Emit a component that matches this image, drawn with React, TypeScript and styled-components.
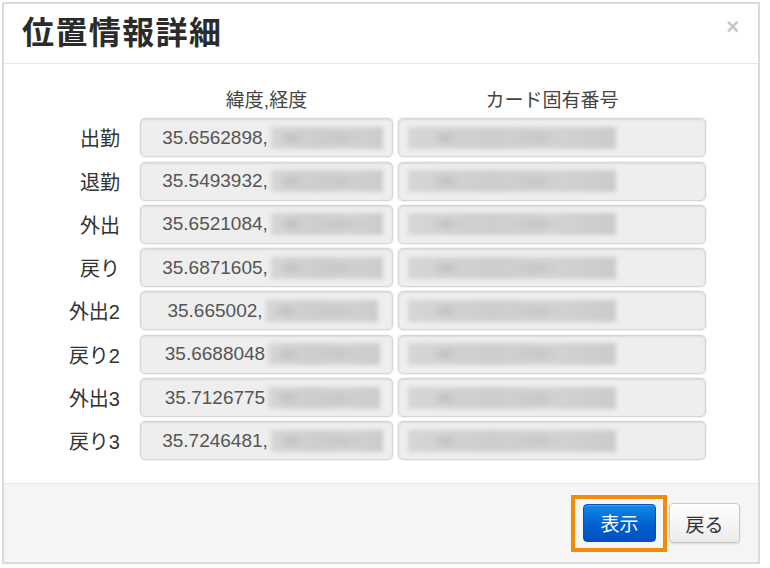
import styled, { createGlobalStyle } from "styled-components";

const GlobalStyle = createGlobalStyle`
  html, body {
    margin: 0;
    padding: 0;
    background: #fff;
  }
  body {
    font-family: "Liberation Sans", "Noto Sans CJK JP", Arial, sans-serif;
    color: #333;
  }
`;

const Modal = styled.div`
  box-sizing: border-box;
  width: 758px;
  margin: 2px 0 0 2px;
  border: 2px solid #dadada;
  background: #fff;
`;

const Header = styled.div`
  height: 59px;
  display: flex;
  align-items: center;
  justify-content: space-between;
  padding: 0 18px;
  border-bottom: 1px solid #e6e6e6;
`;

const Title = styled.h1`
  margin: -8px 0 0;
  font-family: "Noto Sans CJK JP", "Liberation Sans", sans-serif;
  font-size: 32px;
  font-weight: 700;
  letter-spacing: 1.4px;
  color: #2b2b2b;
  line-height: 1;
`;

const Close = styled.span`
  font-family: "Liberation Sans", Arial, sans-serif;
  font-size: 22px;
  font-weight: 700;
  color: #c6c6c6;
  margin-top: -14px;
  margin-right: 1px;
`;

const Body = styled.div`
  padding: 18px 51px 23px 0;
`;

const Grid = styled.div`
  display: grid;
  grid-template-columns: 131px 253px 308px;
  column-gap: 5px;
  row-gap: 4.3px;
`;

const ColHead = styled.div`
  height: 32px;
  display: flex;
  align-items: center;
  justify-content: center;
  font-size: 19px;
  color: #444;
`;

const Label = styled.div`
  height: 39px;
  display: flex;
  align-items: center;
  justify-content: flex-end;
  padding-right: 15px;
  font-size: 20px;
  color: #333;
`;

const Field = styled.div<{ $center?: boolean }>`
  box-sizing: border-box;
  height: 39px;
  display: flex;
  align-items: center;
  justify-content: ${(p) => (p.$center ? "center" : "flex-start")};
  padding: ${(p) => (p.$center ? "0 4px 0 16px" : "0 6px")};
  background: #eeeeee;
  border: 1px solid #d6d6d6;
  border-radius: 5px;
  box-shadow: inset 0 1px 2px rgba(0, 0, 0, 0.08), 0 0 0 1px #f4f4f4;
  font-size: 19px;
  color: #555;
  white-space: nowrap;
  overflow: hidden;
`;

const Masked = styled.span<{ $w: number }>`
  display: inline-block;
  flex-shrink: 0;
  width: ${(p) => p.$w}px;
  height: 22px;
  margin-left: 3px;
  background:
    radial-gradient(ellipse 14px 8px at 18% 50%, #c0c0c0, transparent),
    radial-gradient(ellipse 26px 8px at 62% 50%, #c6c6c6, transparent),
    linear-gradient(90deg, #d6d6d6, #cecece 40%, #d3d3d3 70%, #cbcbcb);
  filter: blur(2px);
`;

const Footer = styled.div`
  height: 78px;
  display: flex;
  align-items: center;
  justify-content: flex-end;
  padding-right: 18px;
  background: #f5f5f5;
  border-top: 1px solid #e6e6e6;
`;

const Highlight = styled.span`
  display: inline-flex;
  padding: 5px 7px 6px 8px;
  border: 4px solid #f08c0a;
  margin-right: 2px;
`;

const Button = styled.button<{ $primary?: boolean }>`
  box-sizing: border-box;
  width: ${(p) => (p.$primary ? "73px" : "71px")};
  height: ${(p) => (p.$primary ? "38px" : "40px")};
  font-family: "Liberation Sans", "Noto Sans CJK JP", sans-serif;
  font-size: 19px;
  border-radius: 4px;
  cursor: pointer;
  color: ${(p) => (p.$primary ? "#fff" : "#333")};
  border: 1px solid ${(p) => (p.$primary ? "#0352b8" : "#c8c8c8")};
  background: ${(p) =>
    p.$primary
      ? "linear-gradient(#128ae8, #0060d0 55%, #0050c0)"
      : "linear-gradient(#ffffff, #ececec)"};
  box-shadow: ${(p) =>
    p.$primary ? "inset 0 1px 0 rgba(255,255,255,0.2)" : "0 1px 2px rgba(0,0,0,0.12)"};
`;

const rows = [
  { label: "出勤", lat: "35.6562898," },
  { label: "退勤", lat: "35.5493932," },
  { label: "外出", lat: "35.6521084," },
  { label: "戻り", lat: "35.6871605," },
  { label: "外出2", lat: "35.665002," },
  { label: "戻り2", lat: "35.6688048" },
  { label: "外出3", lat: "35.7126775" },
  { label: "戻り3", lat: "35.7246481," },
];

export default function App() {
  return (
    <>
      <GlobalStyle />
      <Modal>
        <Header>
          <Title>位置情報詳細</Title>
          <Close>×</Close>
        </Header>
        <Body>
          <Grid>
            <div />
            <ColHead>緯度,経度</ColHead>
            <ColHead>カード固有番号</ColHead>
            {rows.map((r) => (
              <Row key={r.label} label={r.label} lat={r.lat} />
            ))}
          </Grid>
        </Body>
        <Footer>
          <Highlight>
            <Button $primary>表示</Button>
          </Highlight>
          <Button>戻る</Button>
        </Footer>
      </Modal>
    </>
  );
}

function Row({ label, lat }: { label: string; lat: string }) {
  return (
    <>
      <Label>{label}</Label>
      <Field $center>
        {lat}
        <Masked $w={112} />
      </Field>
      <Field>
        <Masked $w={208} />
      </Field>
    </>
  );
}
